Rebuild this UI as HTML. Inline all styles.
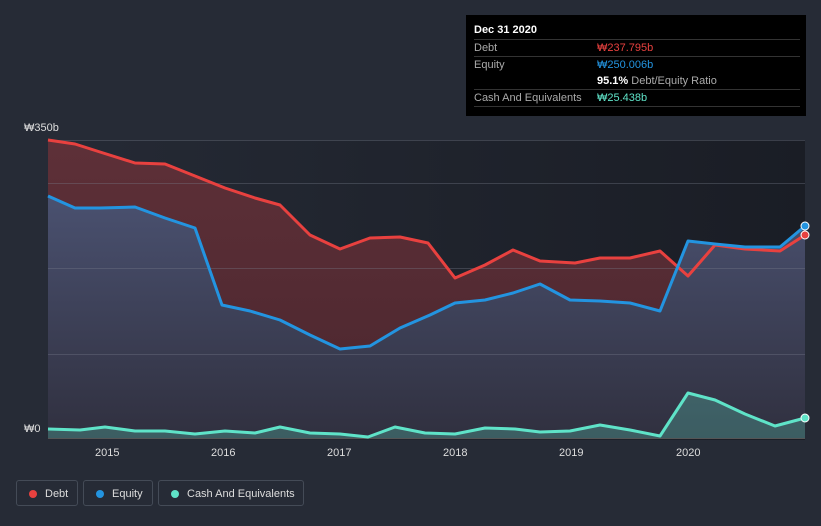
<!DOCTYPE html>
<html><head><style>
body{margin:0;width:821px;height:526px;background:#262b36;font-family:"Liberation Sans",sans-serif;overflow:hidden;position:relative}
.tt{position:absolute;left:466px;top:15px;width:340px;height:101px;background:#000;color:#fff;font-size:11px}
.r{position:absolute;left:8px;right:6px;height:17px;line-height:17px;border-top:1px solid #333}
.r span{position:absolute;left:123px}
.lab{color:#aaa}
.leg{position:absolute;top:480px;height:26px;border:1px solid #444b57;border-radius:3px;color:#ddd;font-size:11px;line-height:26px;box-sizing:border-box;padding-left:28px}
.leg i{position:absolute;left:12px;top:9px;width:8px;height:8px;border-radius:50%}
.ax{position:absolute;color:#ddd;font-size:11px}
</style></head><body>
<svg width="821" height="526" style="position:absolute;left:0;top:0">
<defs><linearGradient id="bg" x1="0" x2="1" y1="0" y2="0"><stop offset="0" stop-color="#252a35"/><stop offset="1" stop-color="#1a1d25"/></linearGradient>
<linearGradient id="eq" x1="0" x2="0" y1="0" y2="1"><stop offset="0" stop-color="#4a5170"/><stop offset="1" stop-color="#30303f"/></linearGradient>
<linearGradient id="dt" x1="0" x2="0" y1="0" y2="1"><stop offset="0" stop-color="#5e3038"/><stop offset="1" stop-color="#4a262e"/></linearGradient></defs>
<rect x="48" y="140" width="757" height="300" fill="url(#bg)"/>
<polygon fill="url(#dt)" points="48,140 75,144 100,152 135,163 165,164 190,174 225,188 255,198 280,205 310,235 340,249 370,238 400,237 428,243 455,278 485,265 513,250 540,261 575,263 600,258 630,258 660,251 688,276 715,245 745,249 780,251 805,235 805,438 48,438"/>
<polygon fill="url(#eq)" points="48,196 75,208 100,208 135,207 165,218 195,228 222,305 250,311 280,320 310,335 340,349 370,346 400,328 430,315 455,303 485,300 513,293 540,284 570,300 600,301 630,303 660,311 688,241 715,244 745,247 780,247 805,226 805,438 48,438"/>
<g stroke="rgba(120,125,140,0.35)" stroke-width="1"><line x1="48" x2="805" y1="140.5" y2="140.5"/><line x1="48" x2="805" y1="183.5" y2="183.5"/><line x1="48" x2="805" y1="268.5" y2="268.5"/><line x1="48" x2="805" y1="354.5" y2="354.5"/><line x1="48" x2="805" y1="438.5" y2="438.5" stroke="#555"/></g>
<polygon fill="rgba(90,200,180,0.3)" points="48,429 80,430 105,427 135,431 165,431 195,434 225,431 255,433 280,427 310,433 340,434 368,437 395,427 425,433 455,434 485,428 515,429 540,432 570,431 600,425 630,430 660,436 688,393 715,400 745,414 775,426 805,418 805,438 48,438"/>
<g fill="none" stroke-width="3" stroke-linejoin="round">
<polyline stroke="#e8413f" points="48,140 75,144 100,152 135,163 165,164 190,174 225,188 255,198 280,205 310,235 340,249 370,238 400,237 428,243 455,278 485,265 513,250 540,261 575,263 600,258 630,258 660,251 688,276 715,245 745,249 780,251 805,235"/>
<polyline stroke="#2394e0" points="48,196 75,208 100,208 135,207 165,218 195,228 222,305 250,311 280,320 310,335 340,349 370,346 400,328 430,315 455,303 485,300 513,293 540,284 570,300 600,301 630,303 660,311 688,241 715,244 745,247 780,247 805,226"/>
<polyline stroke="#5fe3c8" points="48,429 80,430 105,427 135,431 165,431 195,434 225,431 255,433 280,427 310,433 340,434 368,437 395,427 425,433 455,434 485,428 515,429 540,432 570,431 600,425 630,430 660,436 688,393 715,400 745,414 775,426 805,418"/>
</g>
<circle cx="805" cy="226" r="4" fill="#2394e0" stroke="#fff"/><circle cx="805" cy="235" r="4" fill="#e8413f" stroke="#fff"/><circle cx="805" cy="418" r="4" fill="#5fe3c8" stroke="#fff"/>
</svg>
<div class="ax" style="left:24px;top:122px">₩350b</div>
<div class="ax" style="left:24px;top:423px">₩0</div>
<div class="ax" style="left:95px;top:447px">2015</div>
<div class="ax" style="left:211px;top:447px">2016</div>
<div class="ax" style="left:327px;top:447px">2017</div>
<div class="ax" style="left:443px;top:447px">2018</div>
<div class="ax" style="left:559px;top:447px">2019</div>
<div class="ax" style="left:676px;top:447px">2020</div>
<div class="tt">
<div style="position:absolute;left:8px;top:9px;font-weight:bold">Dec 31 2020</div>
<div class="r" style="top:24px"><b class="lab" style="font-weight:normal">Debt</b><span style="color:#e8413f">₩237.795b</span></div>
<div class="r" style="top:41px"><b class="lab" style="font-weight:normal">Equity</b><span style="color:#2394e0">₩250.006b</span></div>
<div class="r" style="top:58px;border-top:none"><span><b>95.1%</b> <em class="lab" style="font-style:normal">Debt/Equity Ratio</em></span></div>
<div class="r" style="top:74px"><b class="lab" style="font-weight:normal">Cash And Equivalents</b><span style="color:#5fe3c8">₩25.438b</span></div>
<div class="r" style="top:91px;height:0"></div>
</div>
<div class="leg" style="left:16px;width:62px"><i style="background:#e8413f"></i>Debt</div>
<div class="leg" style="left:83px;width:70px"><i style="background:#2394e0"></i>Equity</div>
<div class="leg" style="left:158px;width:146px"><i style="background:#5fe3c8"></i>Cash And Equivalents</div>
</body></html>
